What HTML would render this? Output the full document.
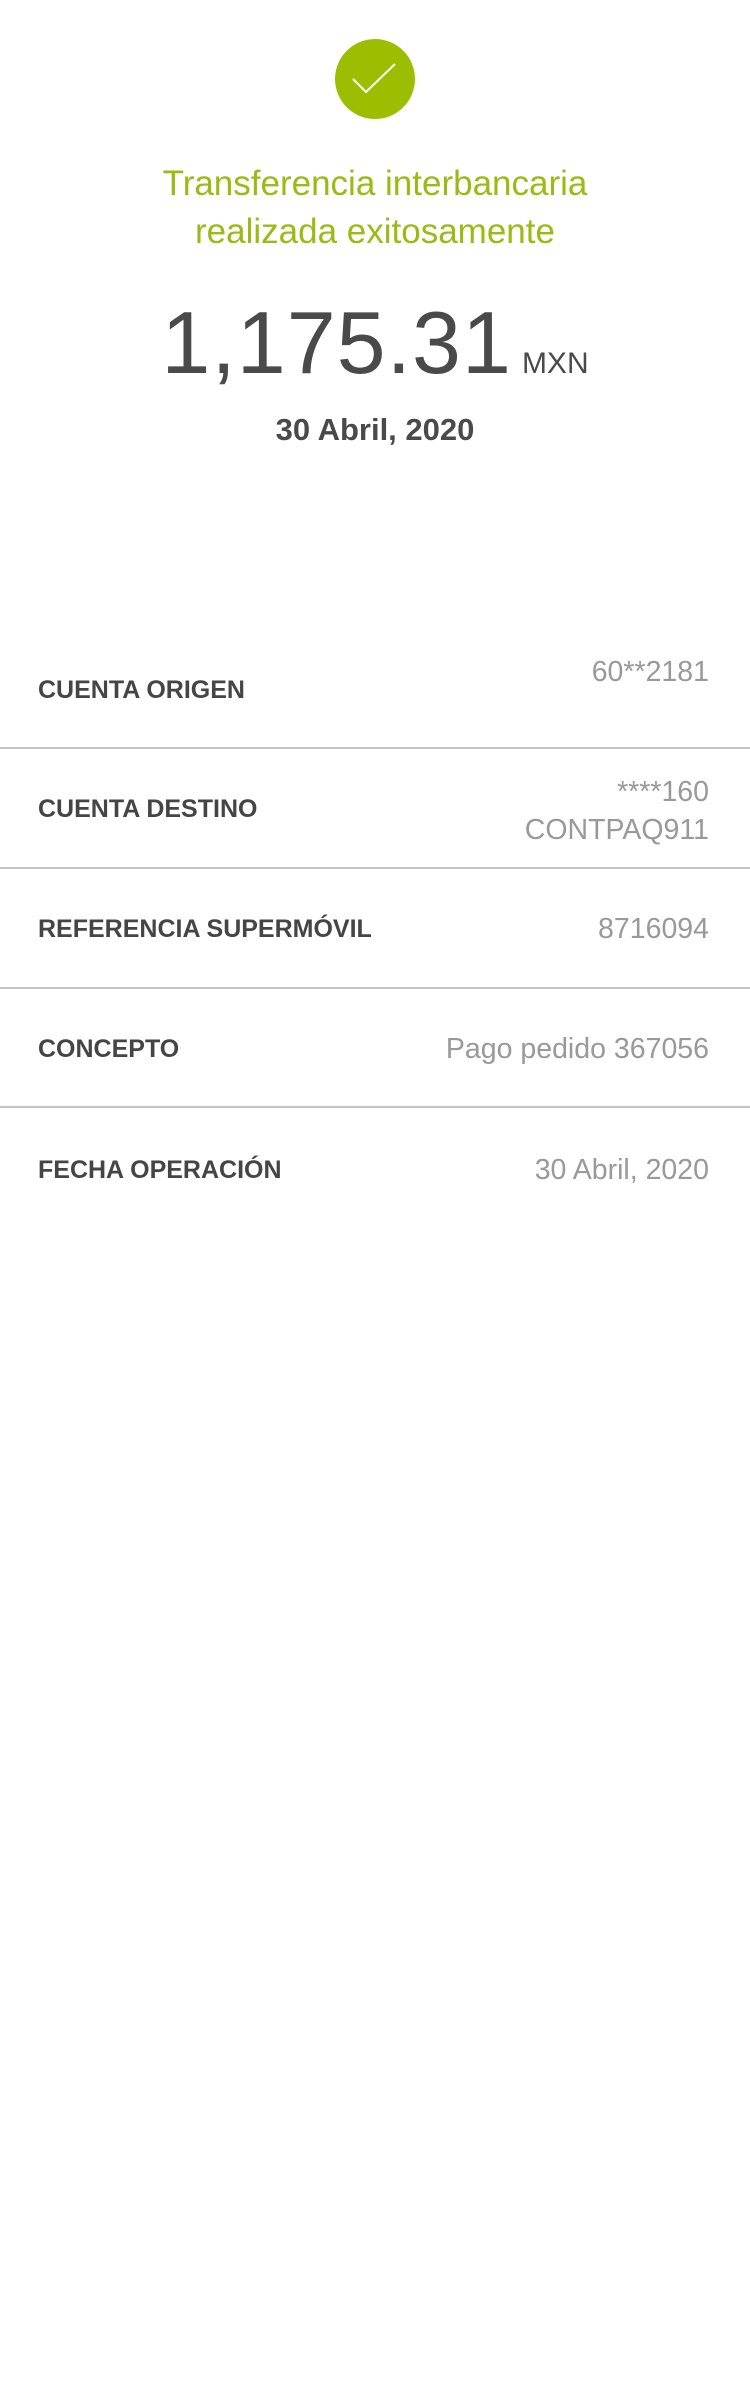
<!DOCTYPE html>
<html><head><meta charset="utf-8"><style>
*{margin:0;padding:0;box-sizing:border-box}
body{width:750px;height:2389px;background:#fff;font-family:"Liberation Sans",sans-serif;position:relative;overflow:hidden}
.abs{position:absolute}
.title{left:0;width:750px;text-align:center;color:#9bbb14;font-size:35px;line-height:48px;top:160px}
.amt{top:292px;left:0;width:750px;text-align:center;color:#4a4a4a}
.amt .n{font-size:88px;letter-spacing:1px}
.amt .c{font-size:30px;margin-left:10px}
.date{top:412px;left:0;width:750px;text-align:center;font-size:31px;font-weight:bold;color:#4a4a4a}
.lbl{left:38px;font-size:25px;font-weight:bold;color:#454545}
.val{right:41px;text-align:right;font-size:28.5px;color:#999;line-height:38px}
.sep{left:0;width:750px;height:2px;background:#c4c4c4}
</style></head><body>
<svg class="abs" style="left:335px;top:39px" width="80" height="80" viewBox="0 0 80 80"><circle cx="40" cy="40" r="40" fill="#9bbf00"/><path d="M18 40 L31 53 L60 25" stroke="#fff" stroke-width="2" fill="none"/></svg>
<div class="abs title">Transferencia interbancaria<br>realizada exitosamente</div>
<div class="abs amt"><span class="n">1,175.31</span><span class="c">MXN</span></div>
<div class="abs date">30 Abril, 2020</div>

<div class="abs lbl" style="top:676px">CUENTA ORIGEN</div>
<div class="abs val" style="top:653px">60**2181</div>
<div class="abs sep" style="top:747px"></div>

<div class="abs lbl" style="top:795px">CUENTA DESTINO</div>
<div class="abs val" style="top:773px">****160<br>CONTPAQ911</div>
<div class="abs sep" style="top:867px"></div>

<div class="abs lbl" style="top:915px">REFERENCIA SUPERMÓVIL</div>
<div class="abs val" style="top:910px">8716094</div>
<div class="abs sep" style="top:987px"></div>

<div class="abs lbl" style="top:1035px">CONCEPTO</div>
<div class="abs val" style="top:1030px">Pago pedido 367056</div>
<div class="abs sep" style="top:1106px"></div>

<div class="abs lbl" style="top:1156px">FECHA OPERACIÓN</div>
<div class="abs val" style="top:1151px">30 Abril, 2020</div>
</body></html>
